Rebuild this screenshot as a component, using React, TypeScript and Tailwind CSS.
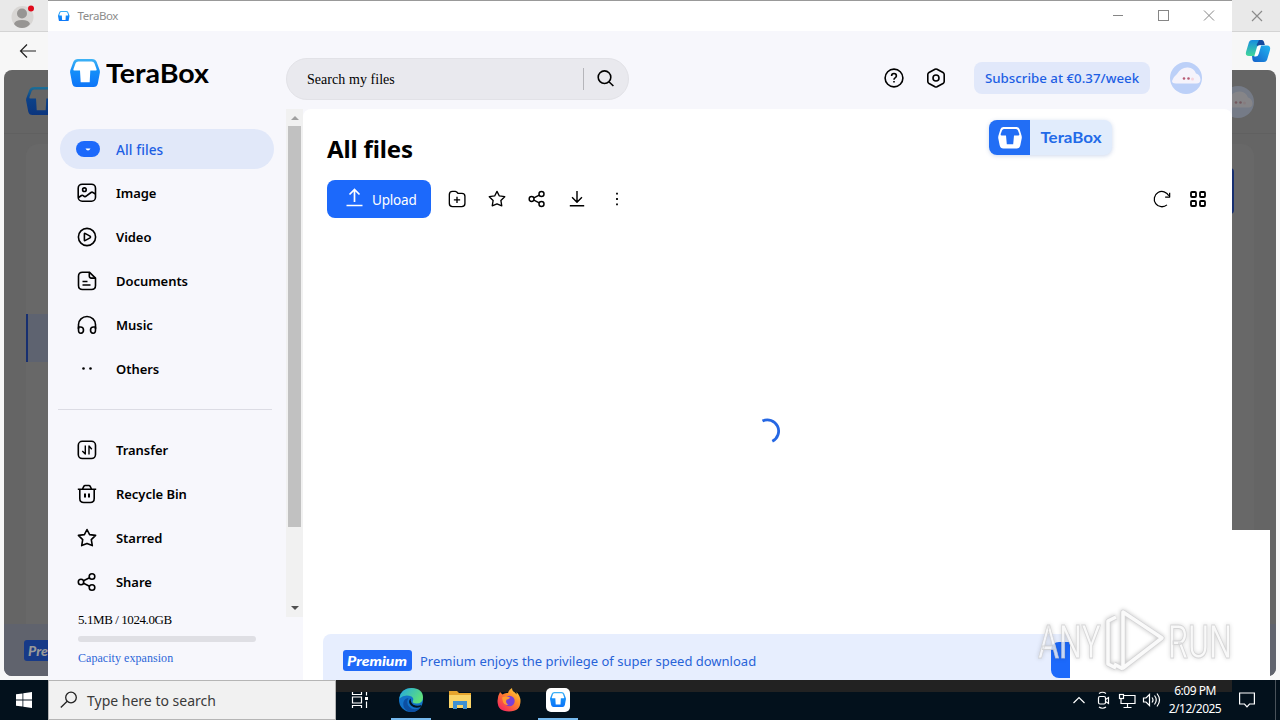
import type { ReactNode } from "react";

const BoxMark = ({ size, id, dim }: { size: number; id: string; dim?: boolean }) => (
  <svg width={size} height={size * 0.94} viewBox="0 0 30 28" className="shrink-0">
    <defs>
      <linearGradient id={id} x1="0" y1="0" x2="0" y2="1">
        <stop offset="0" stopColor={dim ? "#1d6f96" : "#3fb3f5"} />
        <stop offset="0.4" stopColor={dim ? "#0c4289" : "#1590f9"} />
        <stop offset="1" stopColor={dim ? "#0b357e" : "#0d74f8"} />
      </linearGradient>
    </defs>
    <path
      d="M8 0h14q3.500 0 4.700 3L29.600 11q.5 1.500.2 3l-2 10.500Q27 28 23.500 28h-17Q3 28 2.200 24.500L.2 14q-.3-1.500.2-3L3.300 3Q4.500 0 8 0z"
      fill={`url(#${id})`}
    />
    <path
      d="M8.300 2.400h13.400q2 0 2.700 1.800l2.200 6q.4 1.300-.8 1.300h-5.500l-.6 11.700h-9L10 11.500H4.200q-1.200 0-.8-1.300l2.200-6q.7-1.800 2.700-1.800z"
      fill={dim ? "#656565" : "#fff"}
    />
  </svg>
);

const Icon = ({ children, size = 20 }: { children: ReactNode; size?: number }) => (
  <svg
    width={size}
    height={size}
    viewBox="0 0 20 20"
    fill="none"
    stroke="#000"
    strokeWidth="1.6"
    strokeLinejoin="round"
    className="shrink-0"
  >
    {children}
  </svg>
);

const starPath = "M10 1.500l2.600 5.100 6 .8-4.300 4.200 1 6-5.300-2.200-5.300 2.200 1-6L1.400 7.400l6-.8z";

const ShareIcon = ({ size = 20 }: { size?: number }) => (
  <Icon size={size}>
    <circle cx="4" cy="10" r="2.700" />
    <circle cx="15" cy="4.500" r="2.800" />
    <circle cx="15" cy="15.500" r="2.800" />
    <path d="M6.500 8.700l6-3M6.500 11.300l6 3" />
  </Icon>
);

const mainItems = [
  {
    label: "Image",
    icon: (
      <Icon>
        <rect x="1.200" y="1.200" width="17.300" height="17" rx="4" />
        <circle cx="7.400" cy="6.700" r="1.800" />
        <path d="M1.500 14.500l3-2q1-.6 2 .4 1.500 1.300 3 0L14 9.500q1-.7 2 0l2.500 1.600" />
      </Icon>
    ),
  },
  {
    label: "Video",
    icon: (
      <Icon>
        <circle cx="10" cy="10" r="8.600" />
        <path d="M7.400 6.800v6.400q0 .6.600.4l5-2.700q1-.9 0-1.800L8 6.400q-.6-.2-.6.400z" />
      </Icon>
    ),
  },
  {
    label: "Documents",
    icon: (
      <Icon>
        <path d="M5.500 1.200h6.800l6.200 5.900v7.400q0 4-4 4h-9q-4 0-4-4v-9.300q0-4 4-4z" />
        <path d="M12.300 1.500v3.600q0 2 2 2h4M5.500 10.500h5M5.500 14h8" />
      </Icon>
    ),
  },
  {
    label: "Music",
    icon: (
      <Icon>
        <path d="M1.500 14V9.500a8.500 8 0 0117 0V14" />
        <path d="M1.500 12h2q3 0 3 3t-2.500 3.200-2.500-3.200zM18.500 12h-2q-3 0-3 3t2.500 3.200 2.500-3.200z" />
      </Icon>
    ),
  },
  {
    label: "Others",
    icon: (
      <Icon>
        <circle cx="6.500" cy="9.500" r="1.300" fill="#000" stroke="none" />
        <circle cx="13.500" cy="9.500" r="1.300" fill="#000" stroke="none" />
      </Icon>
    ),
  },
];

const moreItems = [
  {
    label: "Transfer",
    icon: (
      <Icon>
        <rect x="1.300" y="1.300" width="17.200" height="17.200" rx="4" />
        <path d="M8.300 5.500V14l-3-3M12 14.500V6l2.800 3.200" strokeWidth="1.400" />
      </Icon>
    ),
  },
  {
    label: "Recycle Bin",
    icon: (
      <Icon>
        <path d="M.8 5.200h18.400M5.500 5l1.300-2.700q.4-.8 1.300-.8h3.800q.9 0 1.300.8L14.500 5M2.800 5.200v9.300q0 4 4 4h6.400q4 0 4-4V5.200" />
        <path d="M8 9.500v4M12 9.500v4" strokeWidth="2" />
      </Icon>
    ),
  },
  {
    label: "Starred",
    icon: (
      <Icon>
        <path d={starPath} />
      </Icon>
    ),
  },
  { label: "Share", icon: <ShareIcon /> },
];

const NavItem = ({ label, icon }: { label: string; icon: ReactNode }) => (
  <li className="flex h-10 items-center gap-[19px] pl-[17px]">
    {icon}
    <span className="pt-px text-[13px] font-semibold tracking-[-0.050px]">{label}</span>
  </li>
);

const Avatar = ({ size }: { size: number }) => (
  <svg width={size} height={size} viewBox="0 0 32 32">
    <circle cx="16" cy="16" r="16" fill="#bcd0f8" />
    <path d="M2 19q1-4 5-7Q11 5 18 5.500q6 .5 8 6 4 1 4.500 6 0 4-4 4H6q-4 0-4-2.500z" fill="#f5f3fb" />
    <circle cx="14" cy="16.500" r="1.300" fill="#b95c75" />
    <circle cx="18.500" cy="16.500" r="1.300" fill="#b95c75" />
    <circle cx="22.500" cy="17" r="1.500" fill="#f6d3dc" />
  </svg>
);

const Browser = () => (
  <div className="flex h-[680px] flex-col bg-[#f7f7f7]">
    <div className="flex h-8 items-center justify-between border-b border-[#d4d4d4] bg-[#e9e9e9] pr-[17px] pl-[11px]">
      <svg width="24" height="26" viewBox="0 0 24 26">
        <circle cx="11.500" cy="14" r="11" fill="#d8d6d4" />
        <circle cx="11" cy="10.500" r="5" fill="#979593" />
        <path d="M3 21q1-4 8-4t8 4q-3 4-8 4t-8-4z" fill="#979593" />
        <circle cx="20" cy="5.500" r="3" fill="#e00b1c" />
      </svg>
      <svg width="12" height="12" viewBox="0 0 12 12" stroke="#8b8b8b" strokeWidth="1.200">
        <path d="M1 1l10 10M11 1L1 11" />
      </svg>
    </div>
    <div className="flex h-[38px] items-center justify-between pr-[9px] pl-[19px]">
      <svg width="17" height="14" viewBox="0 0 17 14" fill="none" stroke="#222" strokeWidth="1.200">
        <path d="M17 7H1.500M8 .5L1.500 7 8 13.500" />
      </svg>
      <svg width="26" height="24" viewBox="0 0 26 24">
        <defs>
          <linearGradient id="copilotA" x1="0" y1="0" x2="0" y2="1">
            <stop offset="0" stopColor="#178ce0" />
            <stop offset="1" stopColor="#42d79a" />
          </linearGradient>
          <linearGradient id="copilotB" x1="0" y1="1" x2="1" y2="0">
            <stop offset="0" stopColor="#1560c9" />
            <stop offset="1" stopColor="#20b6f2" />
          </linearGradient>
        </defs>
        <path d="M7 1h9q2 0 2.500 2l.8 3h-3q-2 0-2.600 2L11 17H4q-4 0-3-4L4 3q.8-2 3-2z" fill="url(#copilotA)" />
        <path d="M14 1h2.500q2 0 2.500 2l.8 3h-3.500q-2 0-2.600 2L11.500 6z" fill="#144a9e" />
        <path d="M19 23h-9q-2 0-2.500-2L7 17h3q2 0 2.600-2L15 6.500h7q4 0 3 4.500l-3 10q-.8 2-3 2z" fill="url(#copilotB)" />
        <path d="M12 8q.6-1.800 2.400-1.800h1.800L13.700 15q-.8 2.500-3 2.500H9.200z" fill="#fff" />
      </svg>
    </div>
    <div className="relative mx-1 flex h-[606px] flex-col justify-between overflow-hidden rounded-lg bg-[#656565]">
      <div className="flex h-16 items-center justify-between border-b border-[#606060] pr-[22px] pl-[22px]">
        <BoxMark size={30} id="markDim" dim />
        <div className="opacity-40 brightness-75">
          <Avatar size={32} />
        </div>
      </div>
      <div className="absolute top-[74px] right-[22px] bottom-[52px] left-[22px] rounded-t-xl bg-[#686868]" />
      <div className="absolute top-[98px] right-[42px] h-[46px] w-2 rounded bg-[#172f70]" />
      <div className="absolute top-[244px] left-[22px] h-12 w-[22px] border-l-2 border-[#172f70] bg-[#5e6370]" />
      <div className="flex h-[52px] items-center bg-[#60636d] pl-5">
        <span className="rounded-[3px] bg-[#173a88] px-1 font-[Lato] text-[14px] leading-[21px] font-black text-[#999] italic">
          Premium
        </span>
      </div>
    </div>
  </div>
);

const TitleBar = () => (
  <div className="flex h-[31px] shrink-0 items-center border-t border-[#999] bg-white pr-[17px] pl-[10px]">
    <BoxMark size={11.500} id="markTitle" />
    <span className="ml-[8px] text-[11.500px] tracking-[-0.400px] text-[#8c8c8c]">TeraBox</span>
    <svg width="102" height="12" viewBox="0 0 102 12" fill="none" stroke="#868686" className="ml-auto">
      <path d="M0 5.500h10M91 .5l10 10M101 .5L91 10.500" />
      <rect x="45.500" y=".5" width="10" height="10" />
    </svg>
  </div>
);

const Header = () => (
  <header className="flex h-[78px] shrink-0 items-center bg-[#f7f7fc] pr-[30px]">
    <div className="flex w-[238px] items-center pt-[7px] pl-[22px]">
      <BoxMark size={30} id="markLogo" />
      <svg width="110" height="36" className="ml-[6px]">
        <text x="0" y="26.500" textLength="103" lengthAdjust="spacingAndGlyphs" className="font-[Lato] text-[26px] font-bold">
          TeraBox
        </text>
      </svg>
    </div>
    <div className="mt-[18px] flex h-[42px] w-[343px] items-center rounded-full border border-[#e2e2e7] bg-[#e9e9ee] pr-[13px] pl-5">
      <span className="font-['Liberation_Serif'] text-[14px] tracking-[0.050px]">Search my files</span>
      <span className="mr-[13px] ml-auto h-[22px] w-px bg-[#b5b5ba]" />
      <svg width="18" height="18" viewBox="0 0 18 18" fill="none" stroke="#000" strokeWidth="1.600">
        <circle cx="7.500" cy="7.200" r="6.300" />
        <path d="M12.200 12l4.200 4" />
      </svg>
    </div>
    <div className="mt-[16px] ml-auto flex items-center">
      <Icon>
        <circle cx="10" cy="10" r="8.900" />
        <path d="M7.600 8Q7.600 5.500 10 5.500T12.400 8q0 1-1.300 1.900-1.100.7-1.100 1.800M10 13v1.600" />
      </Icon>
      <span className="ml-[22px] flex">
        <Icon>
          <path d="M9 1.200q1-.5 2 0l6 3.300q1.200.7 1.200 2v7q0 1.300-1.200 2l-6 3.300q-1 .5-2 0l-6-3.300q-1.200-.7-1.200-2v-7q0-1.300 1.200-2z" />
          <circle cx="10" cy="10" r="3" />
        </Icon>
      </span>
      <button className="ml-[28px] h-8 w-[176px] rounded-lg bg-[#e1e8fa] pt-[2px] text-[13.300px] font-medium whitespace-nowrap text-[#1d5fe4]">
        Subscribe at €0.37/week
      </button>
      <span className="ml-5">
        <Avatar size={32} />
      </span>
    </div>
  </header>
);

const Sidebar = () => (
  <aside className="flex w-[255px] shrink-0 flex-col bg-[#f7f7fc]">
    <div className="flex h-[508px]">
      <div className="w-[238px] pt-5">
        <ul className="mx-3 flex flex-col gap-1">
          <li className="flex h-10 items-center gap-4 rounded-full bg-[#e1e8f9] pl-4">
            <svg width="24" height="16" viewBox="0 0 24 16" className="shrink-0">
              <rect width="24" height="16" rx="8" fill="#1c69fb" />
              <path d="M9.500 7.500h5q-1 2-2.500 2t-2.500-2z" fill="#fff" />
            </svg>
            <span className="pt-[3px] text-[13.600px] font-medium tracking-[0.100px] text-[#1d5fe4]">All files</span>
          </li>
          {mainItems.map((item) => (
            <NavItem key={item.label} {...item} />
          ))}
        </ul>
        <div className="mt-5 mr-[14px] ml-[10px] h-px bg-[#dcdce4]" />
        <ul className="mx-3 mt-5 flex flex-col gap-1">
          {moreItems.map((item) => (
            <NavItem key={item.label} {...item} />
          ))}
        </ul>
      </div>
      <div className="flex w-[17px] flex-col items-center bg-[#f1f1f1]">
        <div className="flex h-[17px] items-center">
          <svg width="8" height="5" viewBox="0 0 8 5">
            <path d="M0 5l4-4 4 4z" fill="#a0a0a0" />
          </svg>
        </div>
        <div className="h-[401px] w-[13px] bg-[#c1c1c1]" />
        <div className="mt-auto flex h-[17px] items-center">
          <svg width="8" height="5" viewBox="0 0 8 5">
            <path d="M0 0l4 4 4-4z" fill="#505050" />
          </svg>
        </div>
      </div>
    </div>
    <div className="pl-[30px] font-['Liberation_Serif']">
      <p className="-mt-[5px] text-[13px] leading-[15px] tracking-[-0.420px]">5.1MB / 1024.0GB</p>
      <div className="mt-[9px] h-[6px] w-[178px] rounded-full bg-[#dfdfe4]" />
      <p className="mt-[9px] text-[12px] leading-[15px] tracking-[0.050px] text-[#2c66d8]">Capacity expansion</p>
    </div>
  </aside>
);

const Toolbar = () => (
  <div className="mt-[16px] flex h-[38px] items-center">
    <button className="flex h-[38px] w-[104px] items-center gap-[9px] rounded-lg bg-[#1c69fb] pl-[19px] text-white">
      <svg width="17" height="19" viewBox="0 0 17 19" fill="none" stroke="#fff" strokeWidth="1.700" className="-mt-[3px] shrink-0">
        <path d="M8.500 14V1.500M3.500 6.500l5-5 5 5M.5 17.500h16" />
      </svg>
      <span className="pt-[2px] text-[13.500px] tracking-[-0.200px]">Upload</span>
    </button>
    <div className="ml-[17px] flex items-center gap-[22px] pb-px">
      <Icon size={18}>
        <path d="M5 1.500h3q1 0 1.700.8l1.300 1.400h4.500q3.300 0 3.300 3.300v8q0 3.500-3.500 3.500H5q-3.500 0-3.500-3.500V5Q1.500 1.500 5 1.500zM10 7.500v7M6.500 11h7" strokeWidth="1.500" />
      </Icon>
      <Icon size={18}>
        <path d={starPath} strokeWidth="1.500" />
      </Icon>
      <ShareIcon size={18} />
      <Icon size={18}>
        <path d="M10 1v12M4.500 8L10 13.500 15.500 8M2 17.500h16" strokeWidth="1.600" />
      </Icon>
      <Icon size={18}>
        <path d="M9 3h2v2H9zM9 9h2v2H9zM9 15h2v2H9z" fill="#000" stroke="none" />
      </Icon>
    </div>
    <div className="mr-px ml-auto flex items-center gap-[18px]">
      <Icon size={18}>
        <path d="M15.500 16.500A8.500 8.500 0 1117.600 6.500M18.500 3v4.800h-5" strokeWidth="1.400" />
      </Icon>
      <svg width="18" height="18" viewBox="0 0 18 18" fill="none" stroke="#000" strokeWidth="1.800">
        <rect x="2" y="2" width="5" height="5" rx="1" />
        <rect x="11" y="2" width="5" height="5" rx="1" />
        <rect x="2" y="11" width="5" height="5" rx="1" />
        <rect x="11" y="11" width="5" height="5" rx="1" />
      </svg>
    </div>
  </div>
);

const FloatingBadge = () => (
  <div className="absolute top-[11px] left-[686px] flex h-[35px] w-[123px] overflow-hidden rounded-lg bg-[#e1ecfc] shadow-[0_1px_4px_rgba(60,100,180,0.25)]">
    <div className="flex w-[41px] items-center justify-center bg-[#226ef5]">
      <svg width="24" height="22" viewBox="0 0 24 22">
        <path d="M5.500 0h13q2.200 0 3 2l2 6.500q.5 1.500.2 3L22.400 18q-.7 3.500-3.800 3.500H5.400Q2.300 21.500 1.600 18L.3 11.500q-.3-1.500.2-3L2.500 2q.8-2 3-2z" fill="#fff" />
        <path d="M6 2h12q1.500 0 2 1.500l1.300 3.500q.3 1.400-1 1.400h-4.300l-.8 8.800H8.800L8 8.400H3.700q-1.300 0-1-1.400L4 3.500Q4.500 2 6 2z" fill="#226ef5" />
      </svg>
    </div>
    <svg width="82" height="35">
      <text x="10.500" y="23" textLength="61" lengthAdjust="spacingAndGlyphs" fill="#226ae8" className="font-[Lato] text-[16px] font-bold">
        TeraBox
      </text>
    </svg>
  </div>
);

const Content = () => (
  <main className="relative flex flex-1 flex-col overflow-hidden rounded-t-lg bg-white">
    <div className="flex-1 px-6">
      <h1 className="pt-[25px] text-[24px] leading-[30px] font-bold tracking-[-0.150px]">All files</h1>
      <Toolbar />
      <div className="mt-[200px] flex justify-center pl-[1px]">
        <svg width="26" height="26" viewBox="0 0 26 26" fill="none" stroke="#2567e3" strokeWidth="2.800">
          <path d="M7.500 3A11 11 0 0117.300 23.200" />
        </svg>
      </div>
    </div>
    <FloatingBadge />
    <div className="ml-5 flex h-[46px] w-[747px] items-center rounded-tl-lg bg-[#e7eefe] pt-[7px] pl-5">
      <svg width="69" height="21" className="shrink-0">
        <rect width="69" height="21" rx="3" fill="#1f69f8" />
        <text x="4" y="15.500" textLength="60" lengthAdjust="spacingAndGlyphs" fill="#fff" className="font-[Lato] text-[14px] font-black italic">
          Premium
        </text>
      </svg>
      <span className="ml-2 pt-[2px] text-[13px] whitespace-nowrap text-[#2763d8]">
        Premium enjoys the privilege of super speed download
      </span>
      <span className="mb-[1px] ml-auto h-9 w-[19px] rounded-l-lg bg-[#1c69fb]" />
    </div>
  </main>
);

const Watermark = () => (
  <svg width="230" height="76" viewBox="0 0 230 76" className="absolute top-[604px] left-[1030px]">
    <g fill="#fff" fillOpacity="0.75" stroke="#c9c9cb" strokeOpacity="0.700" className="drop-shadow-[0_0_2px_rgba(0,0,0,0.2)]">
      <text x="8" y="54" textLength="63" lengthAdjust="spacingAndGlyphs" className="font-[Roboto] text-[46px]">
        ANY
      </text>
      <text x="138" y="54" textLength="64" lengthAdjust="spacingAndGlyphs" className="font-[Roboto] text-[46px]">
        RUN
      </text>
    </g>
    <g fill="none" strokeLinejoin="round" className="drop-shadow-[0_0_2px_rgba(0,0,0,0.25)]">
      <path d="M93 8l39 26-39 30zM86 13l-8 4v43l8 4M84 60l9 5" stroke="#d4d4d6" strokeWidth="5" />
      <path d="M93 8l39 26-39 30zM86 13l-8 4v43l8 4M84 60l9 5" stroke="#fafafa" strokeWidth="3.500" />
    </g>
  </svg>
);

const EdgeIcon = () => (
  <svg width="24" height="24" viewBox="0 0 24 24">
    <defs>
      <linearGradient id="edgeTop" x1="0" y1="0" x2="1" y2="0.500">
        <stop offset="0" stopColor="#22a7e3" />
        <stop offset="1" stopColor="#5ee07c" />
      </linearGradient>
    </defs>
    <circle cx="12" cy="12" r="12" fill="#1272c8" />
    <path d="M.3 10.500Q2 0 12.500 0 24 .5 24 9.500q0 6-6.500 6-5 0-3.500-3 1-2.300-1.500-4Q6 5.500.3 10.500z" fill="url(#edgeTop)" />
    <path d="M9.500 10q-3 5 1 9 4 4 10.500 1-4 5-10.500 3.800Q3 21 4.500 14q1-3.500 5-4z" fill="#0c4fa2" />
    <path d="M11.500 10.500q-3 3.500.5 7 4 3.500 9.500 1.500l1-2q-3 1-6 .5-5-1-5-7z" fill="#03131f" />
  </svg>
);

const FolderIcon = () => (
  <svg width="22" height="20" viewBox="0 0 22 20">
    <path d="M0 1h8l2 2h12v15H0z" fill="#e7a52d" />
    <path d="M0 5h22v13H0z" fill="#fbd568" />
    <path d="M4 11h14v8h-4v-4H8v4H4z" fill="#3e90d3" />
  </svg>
);

const FirefoxIcon = () => (
  <svg width="24" height="24" viewBox="0 0 24 24">
    <defs>
      <linearGradient id="fox" x1="1" y1="0" x2="0.200" y2="1">
        <stop offset="0" stopColor="#ffe23f" />
        <stop offset="0.450" stopColor="#ff8a2a" />
        <stop offset="1" stopColor="#f5235f" />
      </linearGradient>
    </defs>
    <path d="M3 4l2.500 2.500Q8 4.500 11 5q1-3.500 4-5 0 3 3 4.500l1.500 2V4q4 4 4 9 0 10.500-11.500 10.500T.5 13Q.5 8 3 4z" fill="url(#fox)" />
    <circle cx="12.500" cy="13" r="5.200" fill="#7a3fd6" />
    <path d="M5 9.500q4-2 8 0-1 2-3.500 2.200Q8 15 11.500 16.500 7.500 18 6 14z" fill="#ff9a30" />
  </svg>
);

const Taskbar = () => (
  <footer className="relative flex h-10 bg-[#03111c] text-white">
    <div className="absolute top-0 left-[336px] h-3 w-[896px] bg-[#222]" />
    <div className="flex w-12 items-center justify-center">
      <svg width="16" height="16" viewBox="0 0 16 16" fill="#fff">
        <path d="M0 2.300L6.500 1.400v6.200H0zM7.300 1.300L16 0v7.600H7.300zM0 8.400h6.500v6.200L0 13.700zM7.300 8.400H16V16l-8.700-1.300z" />
      </svg>
    </div>
    <div className="flex w-72 items-center border border-[#b5b5b5] bg-[#f1f1f1] pl-[11px] text-[#3a3a3a]">
      <svg width="18" height="18" viewBox="0 0 18 18" fill="none" stroke="#222" strokeWidth="1.300">
        <circle cx="11" cy="6.500" r="5.300" />
        <path d="M7.200 10.300L.8 16.500" />
      </svg>
      <span className="ml-[9px] text-[14px]">Type here to search</span>
    </div>
    <div className="relative -ml-px flex">
      <div className="flex w-[50px] items-center justify-center">
        <svg width="18" height="16" viewBox="0 0 18 16" fill="none" stroke="#fff" strokeWidth="1.200">
          <path d="M1.500 0v2.500h9V0M1.500 16v-2.500h9V16M1.500 5h9v6h-9zM15.500 0v3.500M15.500 9.500V16" />
          <path d="M14 5h3v3h-3z" fill="#fff" stroke="none" />
        </svg>
      </div>
      <div className="flex w-[52px] items-center justify-center">
        <EdgeIcon />
        <span className="absolute bottom-0 h-[2px] w-10 bg-[#76b9ed]" />
      </div>
      <div className="flex w-[46px] items-center justify-center">
        <FolderIcon />
      </div>
      <div className="flex w-[51px] items-center justify-center">
        <FirefoxIcon />
      </div>
      <div className="flex w-12 items-center justify-center">
        <span className="flex size-6 items-center justify-center rounded-[5px] bg-white">
          <BoxMark size={16} id="markTask" />
        </span>
        <span className="absolute bottom-0 h-[2px] w-10 bg-[#76b9ed]" />
      </div>
    </div>
    <div className="relative ml-auto flex items-center pr-[25px]">
      <svg width="88" height="18" viewBox="0 0 88 18" fill="none" stroke="#fff" strokeWidth="1.200">
        <path d="M.5 12l5.500-5.500 5.500 5.500" />
        <rect x="25.500" y="5.500" width="7" height="7.500" rx="1.500" />
        <path d="M32.500 8.500l3-2v6l-3-2M26 2.500q3.500-2.500 7 0M26 16q3.500 2.500 7 0" />
        <path d="M51 4.500h11v8h-14v-5M54.500 12.500V16M50.500 16.500h8" />
        <rect x="46.500" y="3.500" width="4" height="4" />
        <path d="M70.500 7h2.500l3.500-3.500v11L73 11h-2.500zM79 6.500q2 2.500 0 5M81.500 4.500q3.500 4.500 0 9M84 2.500q5 6.500 0 13" />
      </svg>
      <div className="mr-px ml-[6px] w-[56px] text-center text-[12px] leading-[18px] tracking-[-0.500px] whitespace-nowrap">
        <p>6:09 PM</p>
        <p>2/12/2025</p>
      </div>
      <svg width="16" height="16" viewBox="0 0 16 16" fill="none" stroke="#fff" strokeWidth="1.200" className="ml-[15px]">
        <path d="M.6 1h14.800v11H10.500L8 14.800 5.500 12H.6z" />
      </svg>
      <span className="absolute right-[4px] h-10 w-px bg-[#49525a]" />
    </div>
  </footer>
);

const App = () => {
  return (
    <div className="relative h-[720px] w-[1280px] overflow-hidden font-['Noto_Sans',sans-serif] text-black">
      <Browser />
      <div className="absolute top-[530px] left-[1232px] h-[150px] w-[38px] bg-white" />
      <section className="absolute top-0 left-12 flex h-[680px] w-[1184px] flex-col bg-[#f7f7fc]">
        <TitleBar />
        <Header />
        <div className="flex min-h-0 flex-1">
          <Sidebar />
          <Content />
        </div>
      </section>
      <Watermark />
      <Taskbar />
    </div>
  );
};

export default App;
